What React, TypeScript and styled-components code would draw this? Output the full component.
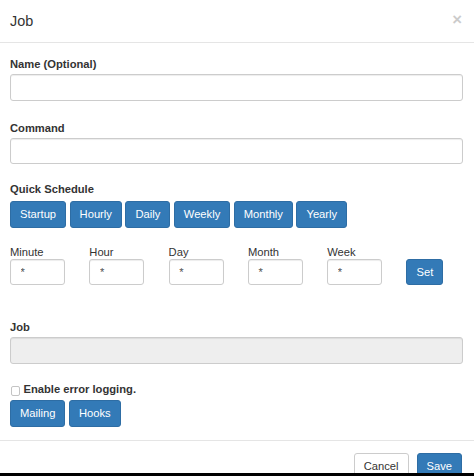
import styled, { createGlobalStyle } from "styled-components"

const GlobalStyle = createGlobalStyle`
    html, body {
        margin: 0;
        padding: 0;
        background: #000;
    }
    body {
        font-family: "Liberation Sans", Arial, Helvetica, sans-serif;
        font-size: 11.2px;
        color: #333;
    }
    * {
        box-sizing: border-box;
    }
`

const Modal = styled.div`
    width: 474px;
    height: 473px;
    background: #fff;
    overflow: hidden;
    display: flex;
    flex-direction: column;
`

const Header = styled.div`
    height: 43px;
    flex: none;
    display: flex;
    align-items: center;
    justify-content: space-between;
    padding: 0 12px 0 10px;
    border-bottom: 1px solid #e5e5e5;
`

const Title = styled.h4`
    margin: 0;
    font-size: 14.4px;
    font-weight: normal;
    line-height: 16px;
    color: #333;
`

const Close = styled.button`
    align-self: flex-start;
    margin-top: 11.5px;
    padding: 0;
    border: 0;
    background: transparent;
    font-family: inherit;
    font-size: 16.8px;
    font-weight: bold;
    line-height: 1;
    color: #000;
    opacity: 0.2;
    cursor: pointer;
`

const Body = styled.div`
    flex: none;
    padding: 13px 11px 13px 10px;
`

const Group = styled.div<{ $mb?: number }>`
    margin-bottom: ${(p) => p.$mb ?? 0}px;
`

const Label = styled.label<{ $mb?: number }>`
    display: block;
    font-weight: bold;
    line-height: 16px;
    margin-bottom: ${(p) => p.$mb ?? 2}px;
`

const Input = styled.input`
    display: block;
    width: 100%;
    height: 26.5px;
    padding: 0 9.6px;
    font-family: inherit;
    font-size: 11.2px;
    color: #555;
    background: ${(p) => (p.disabled ? "#eee" : "#fff")};
    border: 1px solid #ccc;
    border-radius: 3px;
    box-shadow: inset 0 1px 1px rgba(0, 0, 0, 0.075);
    outline: none;
`

const ButtonRow = styled.div`
    display: flex;
    gap: 3.5px;
`

const Button = styled.button<{ $variant?: "primary" | "default" }>`
    display: inline-flex;
    align-items: center;
    height: 26.5px;
    padding: 0 9px;
    font-family: inherit;
    font-size: 11.2px;
    border-radius: 3px;
    cursor: pointer;
    color: ${(p) => (p.$variant === "default" ? "#333" : "#fff")};
    background: ${(p) => (p.$variant === "default" ? "#fff" : "#337ab7")};
    border: 1px solid
        ${(p) => (p.$variant === "default" ? "#ccc" : "#2e6da4")};
`

const CronGrid = styled.div`
    display: grid;
    grid-template-columns: repeat(6, 55px);
    column-gap: 24.3px;
    margin-top: 18px;
    margin-bottom: 34px;
`

const CronCell = styled.div`
    display: flex;
    flex-direction: column;
    justify-content: flex-end;
    align-items: flex-start;
`

const CronLabel = styled.label`
    display: block;
    line-height: 12px;
    margin-bottom: 1px;
`

const CheckRow = styled.div`
    display: flex;
    align-items: flex-start;
    gap: 3.5px;
    margin-top: 17px;
    margin-bottom: 3.5px;
`

const Check = styled.input.attrs({ type: "checkbox" })`
    appearance: none;
    width: 9.5px;
    height: 9.5px;
    margin: 5.5px 0 0 0.5px;
    border: 1px solid #c4c4c4;
    border-radius: 2px;
    background: #fff;
`

const CheckLabel = styled.label`
    font-weight: bold;
    line-height: 16px;
`

const Footer = styled.div`
    flex: none;
    display: flex;
    justify-content: flex-end;
    gap: 8px;
    padding: 12px 12px;
    border-top: 1px solid #e5e5e5;
`

const quick = ["Startup", "Hourly", "Daily", "Weekly", "Monthly", "Yearly"]
const cron = ["Minute", "Hour", "Day", "Month", "Week"]

export default function App() {
    return (
        <>
            <GlobalStyle />
            <Modal>
                <Header>
                    <Title>Job</Title>
                    <Close aria-label="Close">×</Close>
                </Header>
                <Body>
                    <Group $mb={19}>
                        <Label>Name (Optional)</Label>
                        <Input />
                    </Group>
                    <Group $mb={17}>
                        <Label>Command</Label>
                        <Input />
                    </Group>
                    <Group>
                        <Label $mb={4}>Quick Schedule</Label>
                        <ButtonRow>
                            {quick.map((q) => (
                                <Button key={q}>{q}</Button>
                            ))}
                        </ButtonRow>
                    </Group>
                    <CronGrid>
                        {cron.map((c) => (
                            <CronCell key={c}>
                                <CronLabel>{c}</CronLabel>
                                <Input defaultValue="*" />
                            </CronCell>
                        ))}
                        <CronCell>
                            <Button>Set</Button>
                        </CronCell>
                    </CronGrid>
                    <Group>
                        <Label $mb={2}>Job</Label>
                        <Input disabled />
                    </Group>
                    <CheckRow>
                        <Check />
                        <CheckLabel>Enable error logging.</CheckLabel>
                    </CheckRow>
                    <ButtonRow>
                        <Button>Mailing</Button>
                        <Button>Hooks</Button>
                    </ButtonRow>
                </Body>
                <Footer>
                    <Button $variant="default">Cancel</Button>
                    <Button>Save</Button>
                </Footer>
            </Modal>
        </>
    )
}
